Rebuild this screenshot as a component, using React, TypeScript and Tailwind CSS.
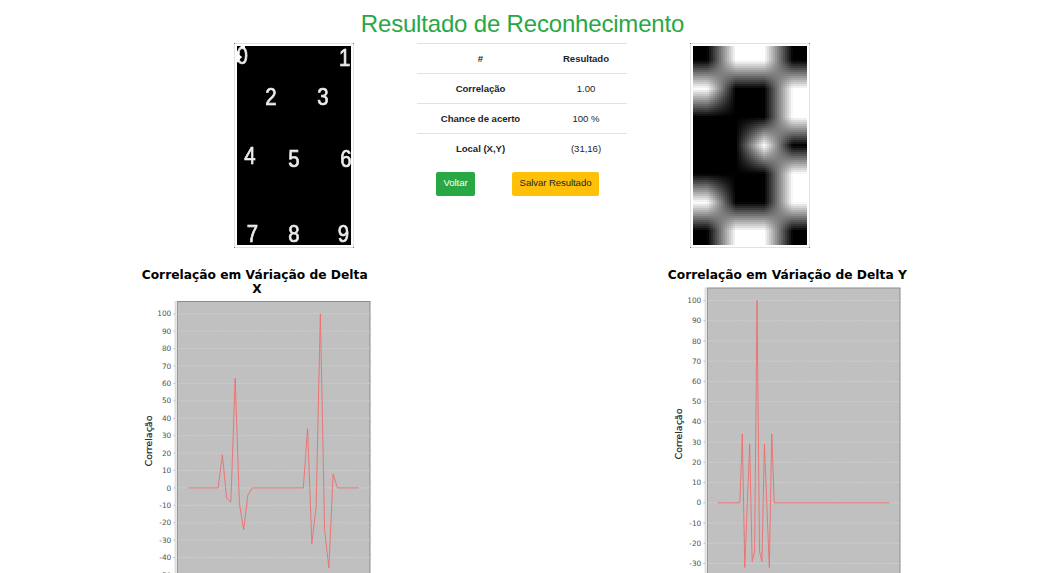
import React from "react";

const DIGITS: { d: string; x: number; y: number }[] = [
  { d: "0", x: 5.2, y: 17.7 },
  { d: "1", x: 107.7, y: 20 },
  { d: "2", x: 33.8, y: 59 },
  { d: "3", x: 85.8, y: 59 },
  { d: "4", x: 13, y: 118.3 },
  { d: "5", x: 57, y: 121 },
  { d: "6", x: 109, y: 121 },
  { d: "7", x: 15.5, y: 195.8 },
  { d: "8", x: 57, y: 195.8 },
  { d: "9", x: 106.5, y: 195.8 },
];

const TEMPLATE = [
  [0, 1, 1, 0],
  [1, 0, 0, 1],
  [0, 0, 0, 1],
  [0, 0, 1, 0],
  [0, 0, 0, 1],
  [1, 0, 0, 1],
  [0, 1, 1, 0],
];

// Bilinear sample of the template, clamped at its edges.
function sample(u: number, v: number) {
  const x = Math.min(3, Math.max(0, u * 4 - 0.5));
  const y = Math.min(6, Math.max(0, v * 7 - 0.5));
  const x0 = Math.min(2, Math.floor(x));
  const y0 = Math.min(5, Math.floor(y));
  const fx = x - x0;
  const fy = y - y0;
  const top = TEMPLATE[y0][x0] * (1 - fx) + TEMPLATE[y0][x0 + 1] * fx;
  const bottom = TEMPLATE[y0 + 1][x0] * (1 - fx) + TEMPLATE[y0 + 1][x0 + 1] * fx;
  return top * (1 - fy) + bottom * fy;
}

const CELLS: { x: number; y: number; v: number }[] = [];
for (let y = 0; y < 199; y += 2) {
  for (let x = 0; x < 114; x += 2) {
    const v = Math.round(255 * sample((x + 1) / 114, (y + 1) / 199));
    if (v > 0) CELLS.push({ x, y, v });
  }
}

function Thumbnail({ children }: { children: React.ReactNode }) {
  return (
    <div className="relative h-[205px] w-[120px] shrink-0 border border-[#dee2e6] bg-white p-[2px]">
      {children}
      <span className="absolute -left-px -top-px size-px bg-[#5585b5]" />
      <span className="absolute -right-px -top-px size-px bg-[#5585b5]" />
      <span className="absolute -bottom-px -left-px size-px bg-[#5585b5]" />
      <span className="absolute -bottom-px -right-px size-px bg-[#5585b5]" />
    </div>
  );
}

function DigitsImage() {
  return (
    <svg width="114" height="199" className="block bg-black">
      <g
        className="[filter:blur(0.5px)]"
        fill="#ececec"
        stroke="#ececec"
        strokeWidth="0.7"
        fontFamily="'Liberation Sans', sans-serif"
        fontSize="24"
        textAnchor="middle"
      >
        {DIGITS.map(({ d, x, y }) => (
          <text key={d} transform={`translate(${x} ${y}) scale(0.85 1)`}>
            {d}
          </text>
        ))}
        <path d="M0 5.5h2.2v3.2l3 2.4-3 2.6v2.5H0zM3.5 0h4.5v2h-4.5z" fill="#fff" stroke="none" />
      </g>
    </svg>
  );
}

function TemplateImage() {
  return (
    <svg width="114" height="199" className="block bg-black" shapeRendering="crispEdges">
      {CELLS.map(({ x, y, v }) => (
        <rect key={`${x}-${y}`} x={x} y={y} width="2" height="2" fill={`rgb(${v},${v},${v})`} />
      ))}
    </svg>
  );
}

type ChartProps = {
  title: { text: string; x: number; y: number; width?: number }[];
  top: number;
  zero: number;
  unit: number;
  min: number;
  labelY: number;
  start: number;
  step: number;
  values: number[];
};

function Chart({ title, top, zero, unit, min, labelY, start, step, values }: ChartProps) {
  const ticks: number[] = [];
  for (let t = 100; t >= min; t -= 10) ticks.push(t);
  const points = values.map((v, i) => `${start + i * step},${zero - v * unit}`).join(" ");
  return (
    <svg width="260" height="313" className="block shrink-0" fontFamily="'DejaVu Sans', sans-serif">
      {title.map((t) => (
        <text
          key={t.text}
          x={t.x}
          y={t.y}
          fontSize="12.2"
          fontWeight="bold"
          textAnchor="middle"
          textLength={t.width}
          lengthAdjust="spacingAndGlyphs"
        >
          {t.text}
        </text>
      ))}
      <rect x="47.3" y={top} width="192.7" height="330" fill="#c0c0c0" stroke="#8c8c8c" />
      <path d={`M45.2 ${top - 0.5}V313`} stroke="#cfcfcf" />
      {ticks.map((t) => {
        const y = zero - t * unit;
        return (
          <g key={t}>
            <path d={`M48 ${y}H239.5`} stroke="#d3d3d3" strokeWidth="0.8" strokeDasharray="1.5 1" />
            <path d={`M43.5 ${y}h1.5`} stroke="#aaa" strokeWidth="0.8" />
            <text x="41.3" y={y + 2.6} fontSize="7.4" textAnchor="end" fill="#555">
              {t}
            </text>
          </g>
        );
      })}
      <text
        transform={`translate(22 ${labelY}) rotate(-90)`}
        fontSize="9"
        textAnchor="middle"
        textLength="51"
        lengthAdjust="spacingAndGlyphs"
        fill="#222"
        stroke="#222"
        strokeWidth="0.15"
      >
        Correlação
      </text>
      <polyline points={points} fill="none" stroke="#f06c6c" strokeWidth="0.9" />
    </svg>
  );
}

const zeros = (n: number): number[] => Array(n).fill(0);

const DELTA_X = [
  ...zeros(8), 19, -6, -8, 63, -9, -24, -4, ...zeros(13), 34, -32, -11, 100, -24, -46, 8, ...zeros(6),
];
const DELTA_Y = [
  ...zeros(10), 34, -32, -1, 29, -29, -24, 100, -24, -29, 29, -1, -32, 34, ...zeros(48),
];

const ROWS = [
  ["#", "Resultado"],
  ["Correlação", "1.00"],
  ["Chance de acerto", "100 %"],
  ["Local (X,Y)", "(31,16)"],
];

export default function App() {
  return (
    <main className="h-[573px] w-[1051px] overflow-hidden bg-white font-['Liberation_Sans',Arial,sans-serif] text-[#212529]">
      <h1 className="flex h-[43px] items-center justify-center pr-[6px] pt-[4px] text-[24px] leading-none tracking-[-0.18px] text-[#28a745]">
        Resultado de Reconhecimento
      </h1>
      <section className="flex h-[217px] items-start pl-[234px]">
        <Thumbnail>
          <DigitsImage />
        </Thumbnail>
        <div className="ml-[63px] w-[210px] shrink-0">
          <table className="w-full table-fixed border-collapse text-center text-[9.6px] leading-[14px] tracking-[-0.04px]">
            <tbody>
              {ROWS.map(([name, value], i) => (
                <tr key={name} className="h-[30px] border-t border-[#dee2e6]">
                  <th className="w-[127px] p-0 font-bold">{name}</th>
                  <td className={i === 0 ? "p-0 pl-px font-bold" : "p-0 pl-px"}>{value}</td>
                </tr>
              ))}
            </tbody>
          </table>
          <div className="mt-[8px] flex pl-[19px] text-[9.6px] tracking-[-0.08px]">
            <button className="h-6 w-[39px] rounded-[2px] bg-[#28a745] text-white">Voltar</button>
            <button className="ml-[37px] h-6 w-[87px] whitespace-nowrap rounded-[2px] bg-[#ffc107]">
              Salvar Resultado
            </button>
          </div>
        </div>
        <div className="ml-[63px]">
          <Thumbnail>
            <TemplateImage />
          </Thumbnail>
        </div>
      </section>
      <section className="flex gap-[270px] pl-[130px]">
        <Chart
          title={[
            { text: "Correlação em Váriação de Delta", x: 124.7, y: 18.8, width: 226 },
            { text: "X", x: 127, y: 32.7 },
          ]}
          top={41.5}
          zero={227.9}
          unit={1.741}
          min={-50}
          labelY={181}
          start={58.3}
          step={4.26}
          values={DELTA_X}
        />
        <Chart
          title={[{ text: "Correlação em Váriação de Delta Y", x: 127.3, y: 18.8, width: 239 }]}
          top={28}
          zero={242.8}
          unit={2.023}
          min={-30}
          labelY={174}
          start={57.8}
          step={2.453}
          values={DELTA_Y}
        />
      </section>
    </main>
  );
}
